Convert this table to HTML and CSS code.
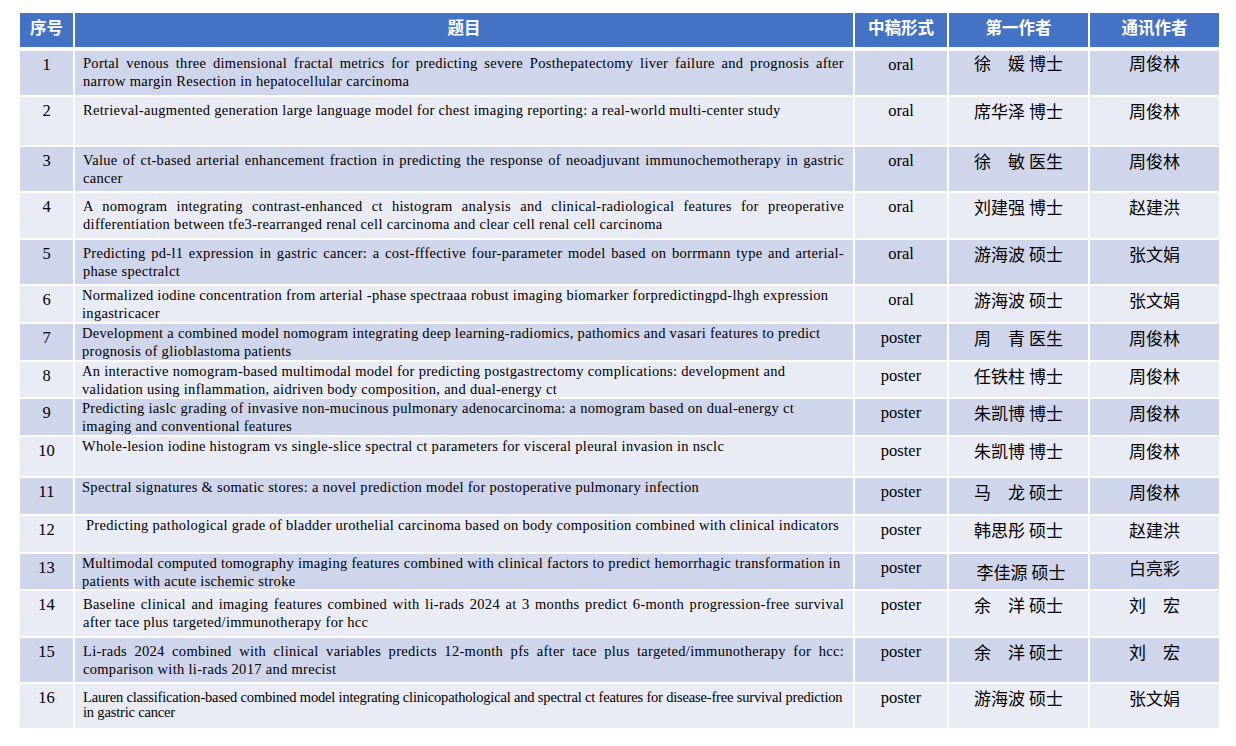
FILE: index.html
```html
<!DOCTYPE html>
<html lang="zh-CN">
<head>
<meta charset="utf-8">
<title>中稿列表</title>
<link rel="stylesheet" href="styles.css">
</head>
<body>
<div class="sheet">
  <div class="hd">序号</div>
  <div class="hd">题目</div>
  <div class="hd">中稿形式</div>
  <div class="hd">第一作者</div>
  <div class="hd">通讯作者</div>

  <div class="c num a">1</div>
  <div class="c ti a just first">Portal venous three dimensional fractal metrics for predicting severe Posthepatectomy liver failure and prognosis after narrow margin Resection in hepatocellular carcinoma</div>
  <div class="c fm a">oral</div>
  <div class="c nm a first">徐　媛 博士</div>
  <div class="c nm a first">周俊林</div>

  <div class="c num b">2</div>
  <div class="c ti b">Retrieval-augmented generation large language model for chest imaging reporting: a real-world multi-center study</div>
  <div class="c fm b">oral</div>
  <div class="c nm b">席华泽 博士</div>
  <div class="c nm b">周俊林</div>

  <div class="c num a">3</div>
  <div class="c ti a just">Value of ct-based arterial enhancement fraction in predicting the response of neoadjuvant immunochemotherapy in gastric cancer</div>
  <div class="c fm a">oral</div>
  <div class="c nm a">徐　敏 医生</div>
  <div class="c nm a">周俊林</div>

  <div class="c num b">4</div>
  <div class="c ti b just">A nomogram integrating contrast-enhanced ct histogram analysis and clinical-radiological features for preoperative differentiation between tfe3-rearranged renal cell carcinoma and clear cell renal cell carcinoma</div>
  <div class="c fm b">oral</div>
  <div class="c nm b">刘建强 博士</div>
  <div class="c nm b">赵建洪</div>

  <div class="c num a">5</div>
  <div class="c ti a just">Predicting pd-l1 expression in gastric cancer: a cost-fffective four-parameter model based on borrmann type and arterial-phase spectralct</div>
  <div class="c fm a">oral</div>
  <div class="c nm a">游海波 硕士</div>
  <div class="c nm a">张文娟</div>

  <div class="c num b">6</div>
  <div class="c ti b tight">Normalized iodine concentration from arterial -phase spectraaa robust imaging biomarker forpredictingpd-lhgh expression ingastricacer</div>
  <div class="c fm b">oral</div>
  <div class="c nm b">游海波 硕士</div>
  <div class="c nm b">张文娟</div>

  <div class="c num a">7</div>
  <div class="c ti a tight">Development a combined model nomogram integrating deep learning-radiomics, pathomics and vasari features to predict prognosis of glioblastoma patients</div>
  <div class="c fm a">poster</div>
  <div class="c nm a">周　青 医生</div>
  <div class="c nm a">周俊林</div>

  <div class="c num b">8</div>
  <div class="c ti b tight">An interactive nomogram-based multimodal model for predicting postgastrectomy complications: development and validation using inflammation, aidriven body composition, and dual-energy ct</div>
  <div class="c fm b">poster</div>
  <div class="c nm b">任铁柱 博士</div>
  <div class="c nm b">周俊林</div>

  <div class="c num a">9</div>
  <div class="c ti a tight">Predicting iaslc grading of invasive non-mucinous pulmonary adenocarcinoma: a nomogram based on dual-energy ct imaging and conventional features</div>
  <div class="c fm a">poster</div>
  <div class="c nm a">朱凯博 博士</div>
  <div class="c nm a">周俊林</div>

  <div class="c num b">10</div>
  <div class="c ti b tight">Whole-lesion iodine histogram vs single-slice spectral ct parameters for visceral pleural invasion in nsclc</div>
  <div class="c fm b">poster</div>
  <div class="c nm b">朱凯博 博士</div>
  <div class="c nm b">周俊林</div>

  <div class="c num a">11</div>
  <div class="c ti a tight">Spectral signatures &amp; somatic stores: a novel prediction model for postoperative pulmonary infection</div>
  <div class="c fm a">poster</div>
  <div class="c nm a">马　龙 硕士</div>
  <div class="c nm a">周俊林</div>

  <div class="c num b">12</div>
  <div class="c ti b tight indent">Predicting pathological grade of bladder urothelial carcinoma based on body composition combined with clinical indicators</div>
  <div class="c fm b">poster</div>
  <div class="c nm b">韩思彤 硕士</div>
  <div class="c nm b">赵建洪</div>

  <div class="c num a">13</div>
  <div class="c ti a tight">Multimodal computed tomography imaging features combined with clinical factors to predict hemorrhagic transformation in patients with acute ischemic stroke</div>
  <div class="c fm a">poster</div>
  <div class="c nm a low">李佳源 硕士</div>
  <div class="c nm a">白亮彩</div>

  <div class="c num b">14</div>
  <div class="c ti b just">Baseline clinical and imaging features combined with li-rads 2024 at 3 months predict 6-month progression-free survival after tace plus targeted/immunotherapy for hcc</div>
  <div class="c fm b">poster</div>
  <div class="c nm b">余　洋 硕士</div>
  <div class="c nm b">刘　宏</div>

  <div class="c num a">15</div>
  <div class="c ti a just">Li-rads 2024 combined with clinical variables predicts 12-month pfs after tace plus targeted/immunotherapy for hcc: comparison with li-rads 2017 and mrecist</div>
  <div class="c fm a">poster</div>
  <div class="c nm a">余　洋 硕士</div>
  <div class="c nm a">刘　宏</div>

  <div class="c num b">16</div>
  <div class="c ti b condensed">Lauren classification-based combined model integrating clinicopathological and spectral ct features for disease-free survival prediction in gastric cancer</div>
  <div class="c fm b">poster</div>
  <div class="c nm b">游海波 硕士</div>
  <div class="c nm b">张文娟</div>
</div>
</body>
</html>
```

FILE: styles.css
```css
html, body {
  margin: 0;
  padding: 0;
  background: #ffffff;
}

body {
  font-family: "Liberation Serif", "Times New Roman", "Noto Sans CJK SC", serif;
  color: #000000;
}

.sheet {
  display: grid;
  grid-template-columns: 53px 778px 92px 139px 129px;
  grid-template-rows: 36px 44px 48px 44px 45px 44px 36px 36px 35px 36px 39px 36px 36px 35px 45px 44px 44px;
  column-gap: 2px;
  row-gap: 2px;
  margin: 13px 0 0 20px;
  width: max-content;
}

.hd {
  background: #4472c4;
  color: #ffffff;
  font-family: "Noto Sans CJK SC", sans-serif;
  font-weight: 700;
  font-size: 16.5px;
  line-height: 28px;
  text-align: center;
  margin-bottom: 2px;
}

.c {
  box-sizing: border-box;
}

.a { background: #cfd5ea; }
.b { background: #e9ebf5; }

.num, .fm {
  font-family: "Liberation Serif", "Times New Roman", serif;
  font-size: 16.5px;
  line-height: 20px;
  text-align: center;
  padding-top: 3.5px;
}

.nm {
  font-family: "Noto Sans CJK SC", sans-serif;
  font-size: 17px;
  line-height: 20px;
  text-align: center;
  padding-top: 3.5px;
  white-space: nowrap;
}

.nm.first { padding-top: 1.5px; }
.nm.low { padding-top: 8px; padding-left: 5px; }

.ti {
  font-family: "Liberation Serif", "Times New Roman", serif;
  font-size: 14.5px;
  letter-spacing: 0.3px;
  line-height: 18px;
  padding: 4px 9px 0 8px;
  text-align: left;
}

.ti.first { padding-top: 3px; }
.ti.just { text-align: justify; }
.ti.tight { padding-top: 0; padding-left: 7px; }
.ti.indent { padding-left: 11px; }
.ti.condensed {
  line-height: 15px;
  padding-top: 6px;
  letter-spacing: -0.18px;
}
```
